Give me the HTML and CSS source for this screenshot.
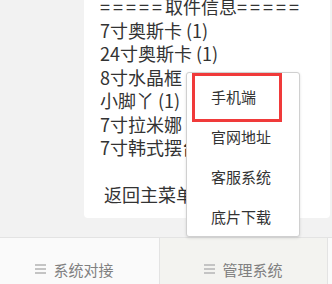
FILE: index.html
```html
<!DOCTYPE html>
<html lang="zh-CN">
<head>
  <meta charset="UTF-8">
  <meta name="viewport" content="width=device-width, initial-scale=1.0">
  <title>取件信息</title>
  <link rel="stylesheet" href="styles.css">
</head>
<body>
  <div class="chat">
    <div class="bubble">
      <p><span class="eq">=====</span>取件信息<span class="eq">=====</span></p>
      <p>7寸奥斯卡 (1)</p>
      <p>24寸奥斯卡 (1)</p>
      <p>8寸水晶框</p>
      <p>小脚丫 (1)</p>
      <p>7寸拉米娜</p>
      <p>7寸韩式摆台</p>
      <p>&nbsp;</p>
      <p class="back">返回主菜单</p>
    </div>
  </div>

  <div class="tabbar">
    <div class="tab first"><span class="burger"><i></i><i></i><i></i></span>系统对接</div>
    <div class="tab active"><span class="burger"><i></i><i></i><i></i></span>管理系统</div>
    <div class="tab"></div>
  </div>

  <!-- popup menu of the second tab -->
  <ul class="menu">
    <li>手机端</li>
    <li>官网地址</li>
    <li>客服系统</li>
    <li>底片下载</li>
  </ul>
  <div class="mark"></div>
</body>
</html>
```

FILE: styles.css
```css
* {
  margin: 0;
  padding: 0;
  box-sizing: border-box;
}

body {
  width: 332px;
  height: 284px;
  overflow: hidden;
  background: #f2f2f2;
  font-family: "Noto Sans CJK SC", "Noto Sans", sans-serif;
  color: #333;
  position: relative;
}

.chat {
  padding-left: 84px;
  padding-right: 2px;
  margin-top: -20px;
}

.bubble {
  background: #fff;
  border-radius: 0 0 4px 4px;
  padding: 15px 10px 11px 16px;
  font-size: 18px;
  line-height: 23.5px;
}

.bubble p {
  white-space: nowrap;
}

.eq {
  letter-spacing: 3px;
}

.bubble .back {
  padding-left: 4px;
}

.tabbar {
  display: flex;
  margin-top: 19px;
  height: 60px;
  border-top: 1px solid #e3e3e3;
}

.tab {
  display: flex;
  align-items: center;
  justify-content: center;
  padding-top: 4px;
  font-size: 15px;
  color: #808080;
  background: #fafafa;
  border-right: 1px solid #e3e3e3;
}

.tab.first {
  width: 160px;
  padding-right: 10px;
}

.tab.active {
  width: 168px;
  background: #f3f3f0;
}

.tab:last-child {
  flex: 1;
  border-right: none;
}

.burger {
  display: flex;
  flex-direction: column;
  gap: 2px;
  width: 11px;
  margin-right: 7px;
}

.burger i {
  display: block;
  height: 2px;
  background: #c4c4c4;
}

.menu {
  position: absolute;
  left: 186px;
  top: 72px;
  width: 114px;
  height: 165px;
  list-style: none;
  background: #fff;
  border: 1px solid #d0d0d0;
  border-radius: 3px;
  box-shadow: 0 1px 3px rgba(0, 0, 0, 0.12);
  padding-top: 4px;
}

.menu li {
  height: 40px;
  line-height: 40px;
  padding-left: 24px;
  font-size: 15px;
  color: #333;
}

/* red highlight around the first item */
.mark {
  position: absolute;
  left: 192px;
  top: 73px;
  width: 90px;
  height: 49px;
  border: 3px solid #f03a3a;
}
```
